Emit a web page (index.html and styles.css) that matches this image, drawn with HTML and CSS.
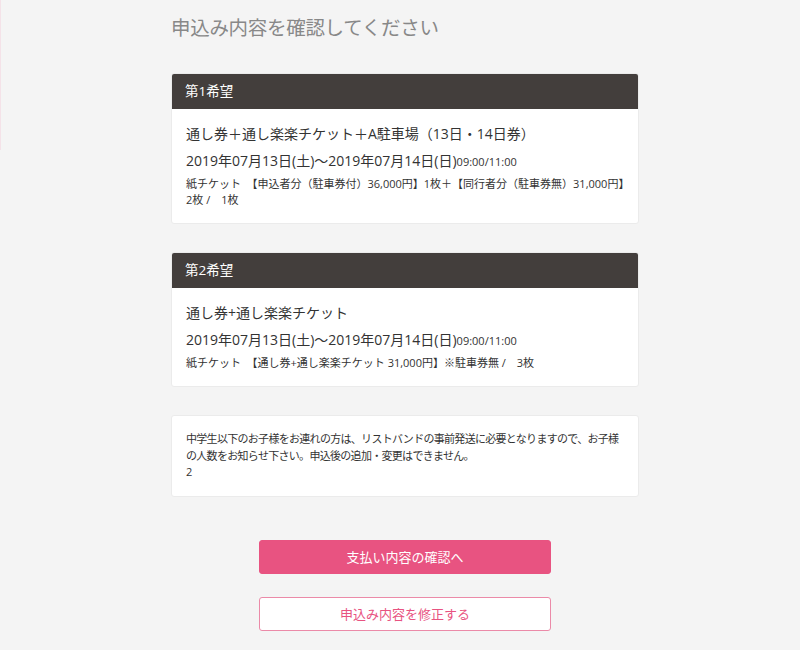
FILE: index.html
```
<!DOCTYPE html>
<html lang="ja">
<head>
	<meta charset="utf-8">
	<title>申込み内容確認</title>
	<link rel="stylesheet" href="styles.css">
</head>
<body>
	<div class="edge"></div>
	<div id="container">
		<h1 class="title">申込み内容を確認してください</h1>

		<div class="card">
			<div class="card-head">第1希望</div>
			<div class="card-body">
				<p class="name">通し券＋通し楽楽チケット＋A駐車場（13日・14日券）</p>
				<p class="date">2019年07月13日(土)～2019年07月14日(日)<span class="time">09:00/11:00</span></p>
				<p class="detail">紙チケット　【申込者分（駐車券付）36,000円】1枚＋【同行者分（駐車券無）31,000円】2枚 /　1枚</p>
			</div>
		</div>

		<div class="card">
			<div class="card-head">第2希望</div>
			<div class="card-body">
				<p class="name">通し券+通し楽楽チケット</p>
				<p class="date">2019年07月13日(土)～2019年07月14日(日)<span class="time">09:00/11:00</span></p>
				<p class="detail">紙チケット　【通し券+通し楽楽チケット 31,000円】※駐車券無 /　3枚</p>
			</div>
		</div>

		<div class="card">
			<div class="card-body note">
				<p>中学生以下のお子様をお連れの方は、リストバンドの事前発送に必要となりますので、お子様の人数をお知らせ下さい。申込後の追加・変更はできません。</p>
				<p>2</p>
			</div>
		</div>

		<div class="actions">
			<a class="btn btn-main" href="#">支払い内容の確認へ</a>
			<a class="btn btn-sub" href="#">申込み内容を修正する</a>
		</div>
	</div>
</body>
</html>
```

FILE: styles.css
```
*{
	margin: 0;
	padding: 0;
	box-sizing: border-box;
}
html, body{
	height: 100%;
}
body{
	background: #f4f4f4;
	color: #333;
	font-family: "Open Sans", "Noto Sans CJK JP", sans-serif;
	padding-left: 10px;
	position: relative;
}
.edge{
	position: absolute;
	top: 0;
	left: 0;
	width: 1px;
	height: 150px;
	background: #f4e2e8;
}
#container{
	width: 468px;
	margin: 0 auto;
	padding-top: 12px;
}
.title{
	font-family: "Noto Sans CJK JP", sans-serif;
	font-size: 19.5px;
	font-weight: normal;
	color: #888;
	line-height: 30px;
	margin-bottom: 31px;
	letter-spacing: -0.3px;
}
.card{
	background: #fff;
	border: 1px solid #ebebeb;
	border-radius: 3px;
	margin-bottom: 28px;
	overflow: hidden;
}
.card-head{
	background: #433e3c;
	color: #fff;
	font-size: 13.5px;
	line-height: 36px;
	padding: 0 14px;
	margin: -1px -1px 0;
}
.card-body{
	padding: 13px 14px 15px;
}
.name{
	font-size: 14px;
	line-height: 24px;
}
.date{
	font-size: 14px;
	line-height: 30px;
}
.time{
	font-size: 11px;
	line-height: 1;
}
.detail{
	font-size: 11px;
	line-height: 16px;
	word-break: break-all;
}
.note{
	padding: 15px 14px 15px;
	font-size: 11px;
	line-height: 16.5px;
	letter-spacing: -0.7px;
}
.actions{
	display: flex;
	flex-direction: column;
	align-items: center;
	gap: 23px;
	padding-top: 15px;
}
.btn{
	display: block;
	width: 292px;
	height: 34px;
	line-height: 32px;
	text-align: center;
	font-size: 13px;
	text-decoration: none;
	border-radius: 3px;
	border: 1px solid #e85381;
}
.btn-main{
	background: #e85381;
	color: #fff;
}
.btn-sub{
	background: #fff;
	color: #e85381;
	border-color: #eb8aa8;
}
```
